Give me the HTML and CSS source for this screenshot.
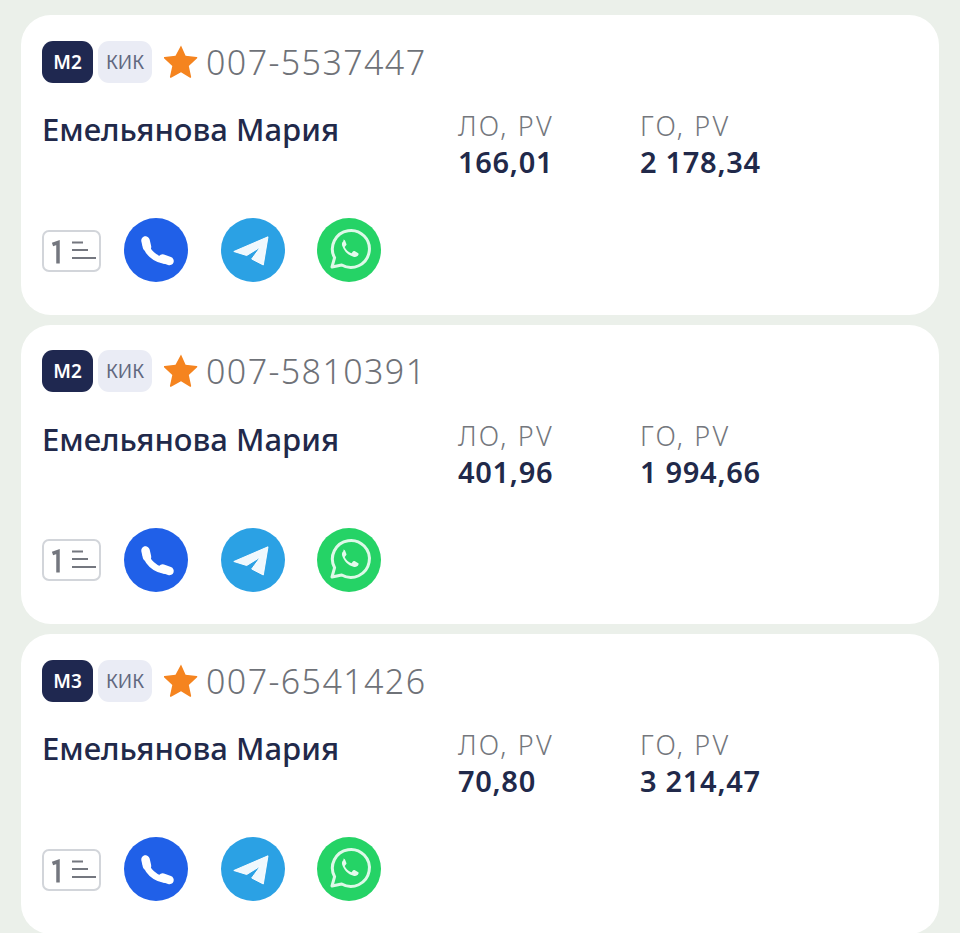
FILE: index.html
```html
<!DOCTYPE html>
<html lang="ru">
<head>
<meta charset="utf-8">
<title>Партнёры</title>
<link rel="stylesheet" href="styles.css">
</head>
<body>
<svg class="defs" width="0" height="0" aria-hidden="true">
  <symbol id="i-star" viewBox="0 0 34 34"><path d="M17 1.500l4.600 10.300 11 1.100c.7.100 1 .9.500 1.400l-8.300 7.600 2.400 11c.1.700-.6 1.200-1.200.9L17 28.300l-9.900 5.500c-.6.300-1.400-.2-1.200-.9l2.400-11-8.300-7.600c-.5-.5-.2-1.300.5-1.400l11-1.100z" fill="#f5841f"/></symbol>
  <symbol id="i-list" viewBox="0 0 59 42"><rect x="1" y="1" width="57" height="40" rx="6" fill="#fff" stroke="#d2d5da" stroke-width="2"/><path d="M10.500 14.500l5.500-2v21" fill="none" stroke="#74777f" stroke-width="3.500"/><path d="M30 12.500h11M30 20h16M30 28h24" stroke="#74777f" stroke-width="2" fill="none"/></symbol>
  <symbol id="i-phone" viewBox="0 0 64 64"><circle cx="32" cy="32" r="32" fill="#2060e8"/><path d="M21.500 22C21 33 31 43 45 43" fill="none" stroke="#fff" stroke-width="6.500" stroke-linecap="round"/><path d="M21.500 22.500l1.500 6.500M38.500 40.500l7 2.500" fill="none" stroke="#fff" stroke-width="8.500" stroke-linecap="round"/></symbol>
  <symbol id="i-tg" viewBox="0 0 64 64"><circle cx="32" cy="32" r="32" fill="#2ba1e4"/><path d="M12.800 33.500L47 18.800 42.300 47 30.700 41 39.500 29 25.700 37.500z" fill="#fff" fill-opacity=".93" stroke="#fff" stroke-opacity=".93" stroke-width="1" stroke-linejoin="round"/></symbol>
  <symbol id="i-wa" viewBox="0 0 64 64"><circle cx="32" cy="32" r="32" fill="#25d366"/><path d="M15 49l2.600-9.300A18.500 18.500 0 1 1 24.700 47z" fill="none" stroke="#fff" stroke-width="3" stroke-linejoin="round" stroke-opacity=".85"/><path d="M26.800 22.800c-1.500 1-2.300 2.800-1.600 4.900 1.900 5.500 5.700 9.400 11.200 11.100 2.300.7 4.300-.3 5-2 .4-.9.300-1.500-.5-1.900l-3.400-1.800c-.6-.3-1.200-.2-1.600.4l-1.100 1.400c-.3.300-.6.400-1 .2-2.700-1.200-4.600-2.900-5.900-5.600-.2-.4-.1-.7.200-1l1-1.200c.4-.4.500-.9.300-1.400l-1.400-3.300c-.4-.8-1.100-1.100-2-.5z" fill="#fff" fill-opacity=".88"/></symbol>
</svg>

<main class="list">
  <article class="card">
    <div class="head">
      <span class="badge badge-rank">M2</span>
      <span class="badge badge-kik">КИК</span>
      <svg class="star"><use href="#i-star"/></svg>
      <span class="phone">007-5537447</span>
    </div>
    <div class="info">
      <div class="name">Емельянова Мария</div>
      <div class="metric"><div class="label">ЛО, PV</div><div class="value">166,01</div></div>
      <div class="metric"><div class="label">ГО, PV</div><div class="value">2 178,34</div></div>
    </div>
    <div class="actions">
      <svg class="list-icon"><use href="#i-list"/></svg>
      <svg class="round"><use href="#i-phone"/></svg>
      <svg class="round"><use href="#i-tg"/></svg>
      <svg class="round"><use href="#i-wa"/></svg>
    </div>
  </article>
  <article class="card">
    <div class="head">
      <span class="badge badge-rank">M2</span>
      <span class="badge badge-kik">КИК</span>
      <svg class="star"><use href="#i-star"/></svg>
      <span class="phone">007-5810391</span>
    </div>
    <div class="info">
      <div class="name">Емельянова Мария</div>
      <div class="metric"><div class="label">ЛО, PV</div><div class="value">401,96</div></div>
      <div class="metric"><div class="label">ГО, PV</div><div class="value">1 994,66</div></div>
    </div>
    <div class="actions">
      <svg class="list-icon"><use href="#i-list"/></svg>
      <svg class="round"><use href="#i-phone"/></svg>
      <svg class="round"><use href="#i-tg"/></svg>
      <svg class="round"><use href="#i-wa"/></svg>
    </div>
  </article>
  <article class="card">
    <div class="head">
      <span class="badge badge-rank">M3</span>
      <span class="badge badge-kik">КИК</span>
      <svg class="star"><use href="#i-star"/></svg>
      <span class="phone">007-6541426</span>
    </div>
    <div class="info">
      <div class="name">Емельянова Мария</div>
      <div class="metric"><div class="label">ЛО, PV</div><div class="value">70,80</div></div>
      <div class="metric"><div class="label">ГО, PV</div><div class="value">3 214,47</div></div>
    </div>
    <div class="actions">
      <svg class="list-icon"><use href="#i-list"/></svg>
      <svg class="round"><use href="#i-phone"/></svg>
      <svg class="round"><use href="#i-tg"/></svg>
      <svg class="round"><use href="#i-wa"/></svg>
    </div>
  </article>
</main>
</body>
</html>
```
FILE: styles.css
```css
* { box-sizing: border-box; }
html, body { margin: 0; height: 933px; overflow: hidden; }
body {
  background: #ebf0ea;
  font-family: "Noto Sans", "Open Sans", sans-serif;
  color: #21294a;
}
.defs { position: absolute; }
.list {
  display: flex;
  flex-direction: column;
  gap: 10px;
  padding: 15px 21px 0;
}
.card {
  height: 299.5px;
  flex: none;
  background: #fff;
  border-radius: 30px;
  padding: 25px 21px 0;
  display: flex;
  flex-direction: column;
}
.head { display: flex; align-items: center; height: 43px; }
.badge {
  height: 42px;
  border-radius: 11px;
  display: flex;
  align-items: center;
  justify-content: center;
  font-size: 19px;
  font-weight: 600;
}
.badge-rank { width: 51px; background: #1f2850; color: #fff; }
.badge-kik { width: 54px; margin-left: 5px; background: #eaecf5; color: #61687f; font-weight: 400; }
.star { width: 34px; height: 34px; margin-left: 12px; margin-top: -2px; }
.phone {
  margin-left: 8px;
  font-size: 34px;
  font-weight: 300;
  color: #6f7278;
  letter-spacing: 1.4px;
}
.info {
  display: grid;
  grid-template-columns: 416px 182px auto;
  margin-top: 27px;
  height: 96px;
}
.name { font-size: 31px; font-weight: 500; line-height: 38px; }
.label { font-size: 27px; font-weight: 300; color: #74777d; line-height: 32px; letter-spacing: 2.2px; }
.value { font-size: 29px; font-weight: 600; line-height: 40px; letter-spacing: 0.7px; }
.actions { display: flex; align-items: center; margin-top: 12px; }
.list-icon { width: 59px; height: 42px; margin-top: 1px; margin-right: 23px; }
.round { width: 64px; height: 64px; margin-right: 32.5px; }
```
